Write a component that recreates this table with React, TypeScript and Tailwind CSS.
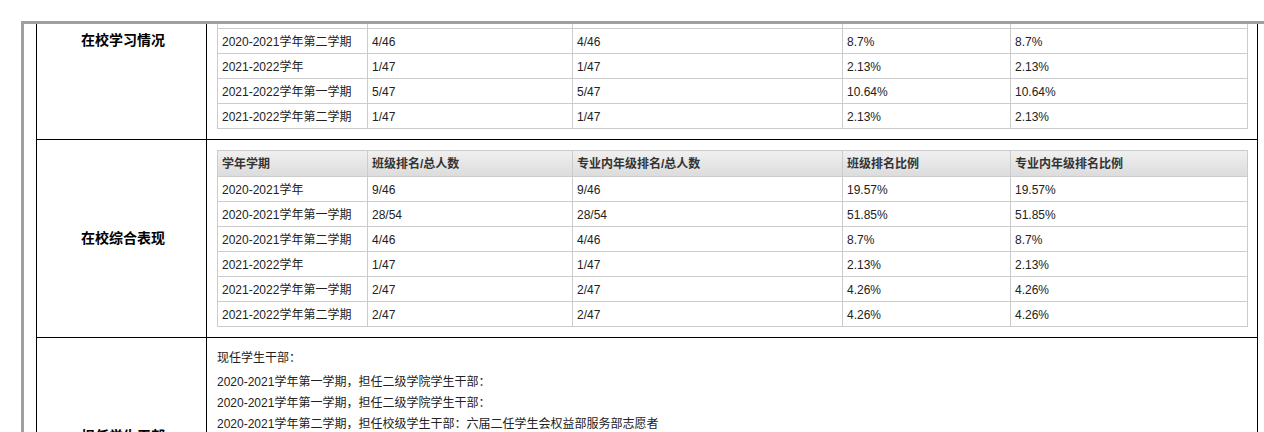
import { useLayoutEffect, useRef } from "react";

type Row = [string, string, string, string, string];

const head: Row = [
  "学年学期",
  "班级排名/总人数",
  "专业内年级排名/总人数",
  "班级排名比例",
  "专业内年级排名比例",
];

const study: Row[] = [
  ["2020-2021学年", "12/46", "12/46", "26.09%", "26.09%"],
  ["2020-2021学年第一学期", "25/54", "25/54", "46.3%", "46.3%"],
  ["2020-2021学年第二学期", "4/46", "4/46", "8.7%", "8.7%"],
  ["2021-2022学年", "1/47", "1/47", "2.13%", "2.13%"],
  ["2021-2022学年第一学期", "5/47", "5/47", "10.64%", "10.64%"],
  ["2021-2022学年第二学期", "1/47", "1/47", "2.13%", "2.13%"],
];

const overall: Row[] = [
  ["2020-2021学年", "9/46", "9/46", "19.57%", "19.57%"],
  ["2020-2021学年第一学期", "28/54", "28/54", "51.85%", "51.85%"],
  ["2020-2021学年第二学期", "4/46", "4/46", "8.7%", "8.7%"],
  ["2021-2022学年", "1/47", "1/47", "2.13%", "2.13%"],
  ["2021-2022学年第一学期", "2/47", "2/47", "4.26%", "4.26%"],
  ["2021-2022学年第二学期", "2/47", "2/47", "4.26%", "4.26%"],
];

const cadre = [
  "2020-2021学年第一学期，担任二级学院学生干部：",
  "2020-2021学年第一学期，担任二级学院学生干部：",
  "2020-2021学年第二学期，担任校级学生干部：六届二任学生会权益部服务部志愿者",
  "2021-2022学年第一学期，担任二级学院学生干部：",
  "2021-2022学年第一学期，担任校级学生干部：",
  "2021-2022学年第二学期，担任二级学院学生干部：",
  "2021-2022学年第二学期，担任校级学生干部：",
];

const RankTable = ({ rows }: { rows: Row[] }) => {
  return (
    <div className="border border-[#cccccc] text-[12px] text-[#222]">
      <div className="grid h-[25px] grid-cols-[149px_205px_270px_168px_237px] bg-linear-to-b from-[#f0f0f0] to-[#dcdcdc] font-bold text-[#333]">
        {head.map((h, i) => (
          <div
            key={i}
            className={`flex items-center px-[4px] ${i > 0 ? "border-l border-[#cccccc]" : ""}`}
          >
            {h}
          </div>
        ))}
      </div>
      {rows.map((row, r) => (
        <div
          key={r}
          className="grid h-[25px] grid-cols-[149px_205px_270px_168px_237px] border-t border-[#cccccc]"
        >
          {row.map((c, i) => (
            <div
              key={i}
              className={`flex items-center px-[4px] pt-[1px] ${i > 0 ? "border-l border-[#cccccc]" : ""}`}
            >
              {c}
            </div>
          ))}
        </div>
      ))}
    </div>
  );
};

const Section = ({
  label,
  first,
  children,
}: {
  label: string;
  first?: boolean;
  children: React.ReactNode;
}) => (
  <div className={`grid grid-cols-[170px_1fr] ${first ? "" : "border-t border-black"}`}>
    <div className="flex items-center justify-center border-r border-black pl-[3px] text-[14px] font-bold text-black">
      {label}
    </div>
    <div className="pl-[10px] pr-[9px]">{children}</div>
  </div>
);

export default function App() {
  const frame = useRef<HTMLDivElement>(null);

  // the panel is shown scrolled down a little
  useLayoutEffect(() => {
    if (frame.current) frame.current.scrollTop = 83;
  }, []);

  return (
    <div className="h-[432px] w-[1264px] overflow-hidden bg-white pl-[21px] pt-[21px] font-['Liberation_Sans','Noto_Sans_CJK_SC',sans-serif]">
      <div
        ref={frame}
        className="h-[440px] w-[1280px] overflow-hidden border-l-[3px] border-t-[3px] border-[#a0a0a0] pl-[12px]"
      >
        <div className="w-[1222px] border border-black">
          <Section label="在校学习情况" first>
            <div className="py-[10px]">
              <RankTable rows={study} />
            </div>
          </Section>
          <Section label="在校综合表现">
            <div className="py-[10px]">
              <RankTable rows={overall} />
            </div>
          </Section>
          <Section label="担任学生干部">
            <div className="pb-[15px] pt-[10px] text-[12px] leading-[21px] text-[#222]">
              <p className="mb-[3px]">现任学生干部：</p>
              {cadre.map((t, i) => (
                <p key={i}>{t}</p>
              ))}
            </div>
          </Section>
        </div>
      </div>
    </div>
  );
}
